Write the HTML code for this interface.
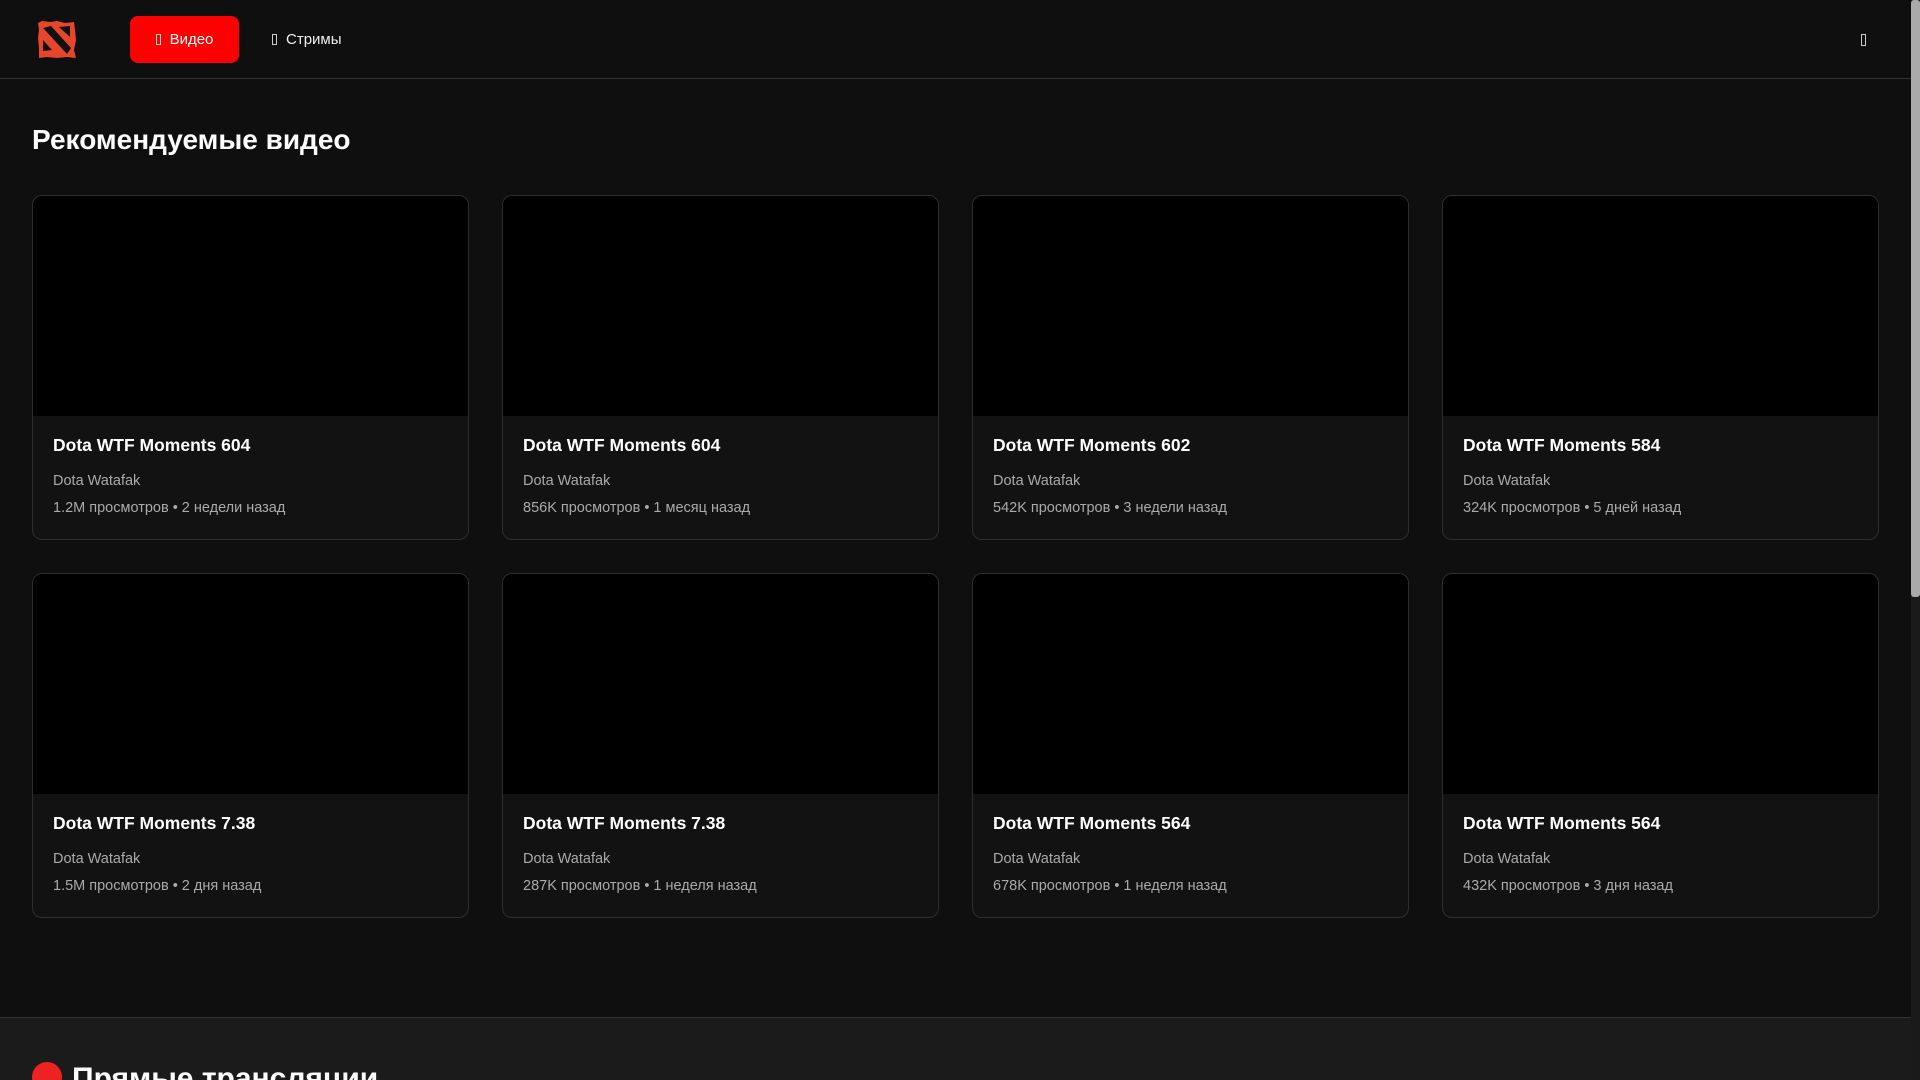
<!DOCTYPE html>
<html style="overflow:hidden;height:1080px"><head><meta charset="utf-8"><style>
*{box-sizing:border-box;margin:0;padding:0}
body{width:1920px;height:1080px;overflow:hidden;background:#0f0f0f;font-family:"Liberation Sans",sans-serif;color:#fff;position:relative}
.hdr{position:absolute;left:0;top:0;width:1911px;height:79px;border-bottom:1px solid #333;background:#0f0f0f}
.logo{position:absolute;left:37px;top:20px}
.btn{position:absolute;top:16px;height:47px;border-radius:8px;font-size:15px;line-height:47px}
.b1{left:130px;width:109px;background:#f00;text-align:center}
.b2{left:272px;width:90px;color:#eee}
.ic{display:inline-block;width:5px;height:11px;border:1px solid #ccc;margin-right:9px;vertical-align:-1px}
.b1 .ic{border-color:#fcc}
.ric{position:absolute;left:1861px;top:34px;width:5px;height:12px;border:1px solid #ccc}
h2{position:absolute;left:32px;top:124px;font-size:28px;font-weight:bold}
.card{position:absolute;width:437px;height:345px;background:#121212;border:1px solid #2e2e2e;border-radius:10px;overflow:hidden}
.th{height:220px;background:#000}
.t{position:absolute;left:20px;top:239px;font-size:17.5px;font-weight:bold}
.c{position:absolute;left:20px;top:277px;font-size:14.5px;color:#aaa}
.s{position:absolute;left:20px;top:304px;font-size:14.5px;color:#aaa}
.s b{font-weight:normal;margin:0 4px}
.foot{position:absolute;left:0;top:1017px;width:1911px;height:63px;background:#1b1b1b;border-top:1px solid #333;overflow:hidden}
.foot div{position:absolute;left:32px;top:44px;font-size:30px;font-weight:bold;white-space:nowrap}
.dot{display:inline-block;width:30px;height:30px;border-radius:50%;background:#e22;margin-right:10px;vertical-align:-4px}
.sb{position:absolute;left:1911px;top:0;width:9px;height:1080px;background:#1a1a1a}
.sb div{width:9px;height:597px;background:#aaa;border-radius:3px}
</style></head><body>
<div class="hdr">
<svg class="logo" width="40" height="39" viewBox="0 0 40 39"><path d="M1 3 L5 1 L14 2 L20 1 L28 3 L37 2 L38 10 L39 20 L37 30 L39 38 L30 37 L20 38 L10 37 L2 38 L2 28 L1 18 L2 10Z" fill="#e8462a"/><path d="M6 8 L14 6 L34 28 L30 34Z M6 20 L6 31 L15 30Z M22 7 L33 6 L33 17Z" fill="#111"/></svg>
<div class="btn b1"><span class="ic"></span>Видео</div>
<div class="btn b2"><span class="ic"></span>Стримы</div>
<div class="ric"></div>
</div>
<h2>Рекомендуемые видео</h2>

<div class="card" style="left:32px;top:195px"><div class="th"></div><div class="t">Dota WTF Moments 604</div><div class="c">Dota Watafak</div><div class="s">1.2M просмотров<b>•</b>2 недели назад</div></div>
<div class="card" style="left:502px;top:195px"><div class="th"></div><div class="t">Dota WTF Moments 604</div><div class="c">Dota Watafak</div><div class="s">856K просмотров<b>•</b>1 месяц назад</div></div>
<div class="card" style="left:972px;top:195px"><div class="th"></div><div class="t">Dota WTF Moments 602</div><div class="c">Dota Watafak</div><div class="s">542K просмотров<b>•</b>3 недели назад</div></div>
<div class="card" style="left:1442px;top:195px"><div class="th"></div><div class="t">Dota WTF Moments 584</div><div class="c">Dota Watafak</div><div class="s">324K просмотров<b>•</b>5 дней назад</div></div>
<div class="card" style="left:32px;top:573px"><div class="th"></div><div class="t">Dota WTF Moments 7.38</div><div class="c">Dota Watafak</div><div class="s">1.5M просмотров<b>•</b>2 дня назад</div></div>
<div class="card" style="left:502px;top:573px"><div class="th"></div><div class="t">Dota WTF Moments 7.38</div><div class="c">Dota Watafak</div><div class="s">287K просмотров<b>•</b>1 неделя назад</div></div>
<div class="card" style="left:972px;top:573px"><div class="th"></div><div class="t">Dota WTF Moments 564</div><div class="c">Dota Watafak</div><div class="s">678K просмотров<b>•</b>1 неделя назад</div></div>
<div class="card" style="left:1442px;top:573px"><div class="th"></div><div class="t">Dota WTF Moments 564</div><div class="c">Dota Watafak</div><div class="s">432K просмотров<b>•</b>3 дня назад</div></div>

<div class="foot"><div><span class="dot"></span>Прямые трансляции</div></div>
<div class="sb"><div></div></div>
</body></html>
